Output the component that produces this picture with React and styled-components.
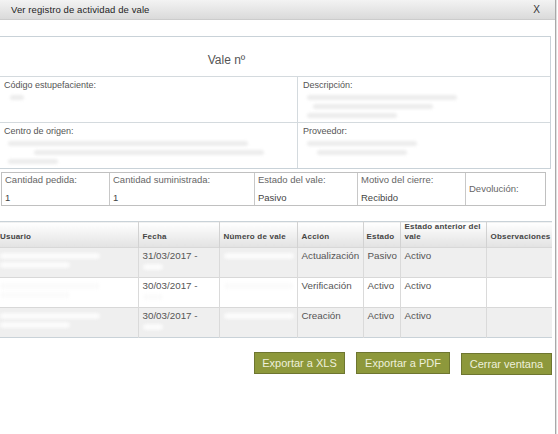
import React from "react";
import styled, { createGlobalStyle } from "styled-components";

const Global = createGlobalStyle`
  html, body {
    margin: 0;
    padding: 0;
    background: #ffffff;
  }
  body {
    font-family: "Liberation Sans", Arial, sans-serif;
    color: #555;
    overflow: hidden;
  }
`;

const Strings = {
  title: "Ver registro de actividad de vale",
  close: "X",
  vale: "Vale nº",
};

const cantidades = [
  { label: "Cantidad pedida:", value: "1", width: 107 },
  { label: "Cantidad suministrada:", value: "1", width: 145 },
  { label: "Estado del vale:", value: "Pasivo", width: 103 },
  { label: "Motivo del cierre:", value: "Recibido", width: 108 },
  { label: "Devolución:", value: null },
];

const columns = [
  { title: "Usuario", width: 142 },
  { title: "Fecha", width: 81 },
  { title: "Número de vale", width: 78 },
  { title: "Acción", width: 66 },
  { title: "Estado", width: 37 },
  { title: "Estado anterior del vale", width: 86 },
  { title: "Observaciones", width: 66 },
];

const rows = [
  { fecha: "31/03/2017 -", accion: "Actualización", estado: "Pasivo", anterior: "Activo" },
  { fecha: "30/03/2017 -", accion: "Verificación", estado: "Activo", anterior: "Activo" },
  { fecha: "30/03/2017 -", accion: "Creación", estado: "Activo", anterior: "Activo" },
];

const App = () => (
  <>
    <Global />
    <Dialog>
      <TitleBar>
        <Title>{Strings.title}</Title>
        <CloseX>{Strings.close}</CloseX>
      </TitleBar>
      <Body>
        <Panel>
          <PanelHeading>{Strings.vale}</PanelHeading>
          <PanelRow>
            <PanelCell $w={298}>
              <Label>Código estupefaciente:</Label>
              <Smudges>
                <Smudge $w={14} $ml={6} />
              </Smudges>
            </PanelCell>
            <PanelCell>
              <Label>Descripción:</Label>
              <Smudges>
                <Smudge $w={150} $ml={4} />
                <Smudge $w={120} $ml={10} />
                <Smudge $w={90} $ml={4} />
              </Smudges>
            </PanelCell>
          </PanelRow>
          <PanelRow>
            <PanelCell $w={298}>
              <Label>Centro de origen:</Label>
              <Smudges>
                <Smudge $w={240} $ml={4} />
                <Smudge $w={230} $ml={30} />
                <Smudge $w={50} $ml={4} />
              </Smudges>
            </PanelCell>
            <PanelCell>
              <Label>Proveedor:</Label>
              <Smudges>
                <Smudge $w={110} $ml={4} />
                <Smudge $w={90} $ml={14} />
              </Smudges>
            </PanelCell>
          </PanelRow>
        </Panel>

        <QtyBox>
          {cantidades.map((c) => (
            <QtyCell key={c.label} $w={c.width} $center={c.value === null}>
              <QtyLabel>{c.label}</QtyLabel>
              {c.value !== null && <QtyValue>{c.value}</QtyValue>}
            </QtyCell>
          ))}
        </QtyBox>

        <LogTable>
          <colgroup>
            {columns.map((c) => (
              <col key={c.title} style={{ width: c.width }} />
            ))}
          </colgroup>
          <thead>
            <tr>
              {columns.map((c) => (
                <Th key={c.title}>{c.title}</Th>
              ))}
            </tr>
          </thead>
          <tbody>
            {rows.map((r, i) => (
              <Tr key={i} $shaded={i % 2 === 0}>
                <Td>
                  <CellBlob $w={100} />
                  <CellBlob $w={70} />
                </Td>
                <Td>
                  {r.fecha}
                  <CellBlob $w={20} />
                </Td>
                <Td>
                  <CellBlob $w={70} />
                </Td>
                <Td>{r.accion}</Td>
                <Td>{r.estado}</Td>
                <Td>{r.anterior}</Td>
                <Td />
              </Tr>
            ))}
          </tbody>
        </LogTable>

        <Actions>
          <ActionBtn $w={91}>Exportar a XLS</ActionBtn>
          <ActionBtn $w={94}>Exportar a PDF</ActionBtn>
          <ActionBtn $w={91} $drop={1}>
            Cerrar ventana
          </ActionBtn>
        </Actions>
      </Body>
    </Dialog>
  </>
);

const Dialog = styled.div`
  width: 555px;
  height: 434px;
  border-right: 1px solid #a9a9a9;
  box-shadow: 1px 0 0 #e0e0e0;
  background: #fff;
  overflow: hidden;
`;

const TitleBar = styled.div`
  height: 19px;
  display: flex;
  align-items: center;
  justify-content: space-between;
  padding: 0 11px 0 11px;
  background: linear-gradient(#f3f3f3, #dadada);
  border-bottom: 1px solid #cccccc;
`;

const Title = styled.span`
  font-size: 9.5px;
  color: #1e1e1e;
  letter-spacing: 0.1px;
`;

const CloseX = styled.span`
  font-size: 10px;
  color: #333;
  margin-right: 4px;
`;

const Body = styled.div`
  padding-top: 16px;
  margin-left: -2px;
`;

const Panel = styled.div`
  width: 551px;
  border: 1px solid #c9d2d8;
`;

const PanelHeading = styled.div`
  height: 40px;
  display: flex;
  align-items: center;
  justify-content: center;
  padding-right: 96px;
  padding-top: 7px;
  box-sizing: border-box;
  font-size: 12px;
  color: #555;
  border-bottom: 1px solid #d4dade;
`;

const PanelRow = styled.div`
  display: flex;
  height: 45px;
  & + & {
    border-top: 1px solid #d4dade;
  }
`;

const PanelCell = styled.div`
  width: ${({ $w }) => ($w ? `${$w}px` : "auto")};
  flex: ${({ $w }) => ($w ? "none" : "1")};
  padding: 3px 5px;
  box-sizing: border-box;
  & + & {
    border-left: 1px solid #d4dade;
  }
`;

const Label = styled.div`
  font-size: 9px;
  color: #555;
`;

const Smudges = styled.div`
  display: flex;
  flex-direction: column;
  gap: 4px;
  margin-top: 5px;
`;

const Smudge = styled.span`
  display: block;
  width: ${({ $w }) => $w}px;
  margin-left: ${({ $ml }) => $ml || 0}px;
  height: 5px;
  border-radius: 3px;
  background: #ececec;
  filter: blur(1.5px);
`;

const QtyBox = styled.div`
  display: flex;
  width: 545px;
  height: 34px;
  margin: 3px 0 0 3px;
  border: 1px solid #c0c0c0;
  box-sizing: border-box;
`;

const QtyCell = styled.div`
  width: ${({ $w }) => ($w ? `${$w}px` : "auto")};
  flex: ${({ $w }) => ($w ? "none" : "1")};
  display: flex;
  flex-direction: column;
  justify-content: ${({ $center }) => ($center ? "center" : "space-between")};
  padding: 1px 3px 2px;
  box-sizing: border-box;
  & + & {
    border-left: 1px solid #c8c8c8;
  }
`;

const QtyLabel = styled.span`
  font-size: 9.5px;
  color: #666;
`;

const QtyValue = styled.span`
  font-size: 9.5px;
  color: #444;
`;

const LogTable = styled.table`
  border-collapse: collapse;
  table-layout: fixed;
  width: 556px;
  margin: 15px 0 0 -2px;
  border-top: 1px solid #c9d2d8;
  border-bottom: 1px solid #c9d2d8;
`;

const Th = styled.th`
  height: 19px;
  padding: 0 4px 5px;
  vertical-align: bottom;
  text-align: left;
  font-size: 8px;
  font-weight: bold;
  letter-spacing: 0.2px;
  line-height: 10px;
  color: #444;
  background: linear-gradient(#ffffff, #e2e2e2);
  border-left: 1px solid #d2d2d2;
  &:first-child {
    border-left: none;
  }
  &:nth-child(5) {
    padding-left: 3px;
  }
`;

const Tr = styled.tr`
  background: ${({ $shaded }) => ($shaded ? "#efefef" : "#ffffff")};
  border-top: 1px solid #d8d8d8;
`;

const Td = styled.td`
  height: 27px;
  padding: 2px 4px 0;
  vertical-align: top;
  font-size: 9.8px;
  color: #555;
  border-left: 1px solid #dadada;
  overflow: hidden;
  white-space: nowrap;
  &:first-child {
    border-left: none;
  }
`;

const CellBlob = styled.span`
  display: block;
  width: ${({ $w }) => $w}px;
  height: 6px;
  margin: 3px 0 2px;
  border-radius: 3px;
  background: #fbfbfb;
  filter: blur(1.5px);
`;

const Actions = styled.div`
  display: flex;
  justify-content: flex-end;
  align-items: flex-start;
  gap: 11px;
  padding-right: 3px;
  margin-top: 14px;
`;

const ActionBtn = styled.button`
  width: ${({ $w }) => $w}px;
  height: 22px;
  margin-top: ${({ $drop }) => $drop || 0}px;
  padding: 0;
  background: #8d983b;
  border: 1px solid #6e7630;
  color: #eef0dc;
  font-family: "Liberation Sans", Arial, sans-serif;
  font-size: 11px;
  cursor: pointer;
`;

export default App;
